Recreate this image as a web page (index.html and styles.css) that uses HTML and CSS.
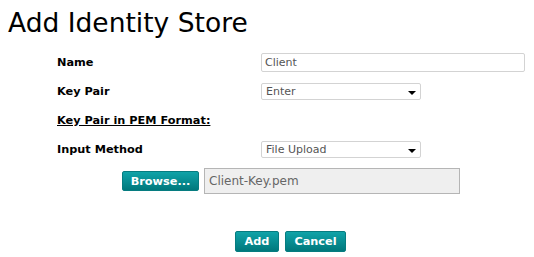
FILE: index.html
```html
<!DOCTYPE html>
<html lang="en">
<head>
    <meta charset="UTF-8">
    <title>Add Identity Store</title>
    <link rel="stylesheet" href="styles.css">
</head>
<body>
    <h1>Add Identity Store</h1>
    <form class="store-form">
        <div class="form-row">
            <label for="name">Name</label>
            <input type="text" id="name" class="text-input" value="Client">
        </div>
        <div class="form-row">
            <label>Key Pair</label>
            <div class="select-box"><span>Enter</span><span class="caret"></span></div>
        </div>
        <div class="form-row">
            <label class="section-label">Key Pair in PEM Format:</label>
        </div>
        <div class="form-row">
            <label>Input Method</label>
            <div class="select-box"><span>File Upload</span><span class="caret"></span></div>
        </div>
        <div class="upload-row">
            <button type="button" class="btn">Browse...</button>
            <div class="file-name">Client-Key.pem</div>
        </div>
        <div class="actions">
            <button type="button" class="btn btn-add">Add</button>
            <button type="button" class="btn btn-cancel">Cancel</button>
        </div>
    </form>
</body>
</html>
```

FILE: styles.css
```css
body {
    margin: 0;
    font-family: 'DejaVu Sans', Verdana, sans-serif;
    background: #fff;
    color: #000;
}

h1 {
    margin: 8px 0 0 8px;
    font-size: 26.5px;
    font-weight: normal;
    line-height: 30px;
}

.store-form {
    margin-top: 10px;
}

.form-row {
    display: grid;
    grid-template-columns: 204px auto;
    align-items: center;
    height: 29px;
    padding-left: 57px;
}

.form-row label {
    font-size: 11.3px;
    font-weight: bold;
}

.section-label {
    text-decoration: underline;
}

.text-input {
    box-sizing: border-box;
    width: 264px;
    height: 19px;
    margin: 0;
    padding: 0 3px;
    border: 1px solid #d3d3d3;
    border-radius: 2px;
    font-family: inherit;
    font-size: 11px;
    color: #555;
}

.select-box {
    box-sizing: border-box;
    display: flex;
    align-items: center;
    justify-content: space-between;
    width: 160px;
    height: 17px;
    padding: 0 4px 0 4px;
    border: 1px solid #d3d3d3;
    border-radius: 2px;
    font-size: 11px;
    color: #555;
}

.caret {
    width: 0;
    height: 0;
    border-left: 4px solid transparent;
    border-right: 4px solid transparent;
    border-top: 4px solid #000;
    margin-top: 2px;
}

.upload-row {
    display: flex;
    align-items: center;
    gap: 5px;
    height: 34px;
    padding-left: 122px;
}

.btn {
    box-sizing: border-box;
    height: 20px;
    margin: 0;
    padding: 0 6px;
    border: 1px solid #067c80;
    border-radius: 2px;
    background: linear-gradient(#10a3a8, #00787c);
    color: #fff;
    font-family: inherit;
    font-size: 11.3px;
    font-weight: bold;
    cursor: pointer;
}

.upload-row .btn {
    width: 77px;
}

.file-name {
    box-sizing: border-box;
    width: 256px;
    height: 26px;
    padding: 5px 4px 0;
    border: 1px solid #b5b5b5;
    background: #efefef;
    font-size: 12px;
    color: #666;
}

.actions {
    display: flex;
    gap: 6px;
    margin-top: 33px;
    padding-left: 235px;
}

.actions .btn {
    height: 21px;
}

.btn-add {
    width: 44px;
}

.btn-cancel {
    width: 61px;
}
```
